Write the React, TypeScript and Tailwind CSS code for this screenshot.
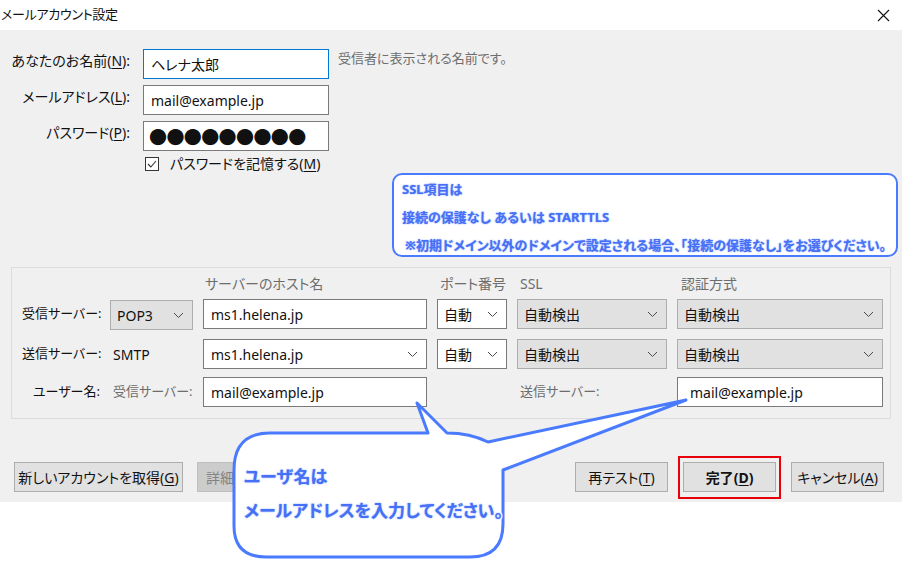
import React from "react";

const Chevron = () => (
  <svg width="11" height="7" viewBox="0 0 11 7" className="shrink-0">
    <polyline points="1,1 5.5,5.5 10,1" fill="none" stroke="#4a4a4a" strokeWidth="1" />
  </svg>
);

function TextBox({
  value,
  width,
  focused = false,
  combo = false,
}: {
  value: string;
  width: string;
  focused?: boolean;
  combo?: boolean;
}) {
  return (
    <div
      className={`flex h-[30px] items-center justify-between border bg-white pl-[7px] pr-[8px] text-[14px] text-[#111] ${width} ${
        focused ? "border-[#0078d7]" : "border-[#7a7a7a]"
      }`}
    >
      <span>{value}</span>
      {combo && <Chevron />}
    </div>
  );
}

function Select({ value, gray = true }: { value: string; gray?: boolean }) {
  return (
    <div
      className={`flex h-[30px] w-full items-center justify-between border pl-[6px] pr-[8px] text-[14px] text-[#111] ${
        gray ? "border-[#adadad] bg-[#e1e1e1]" : "border-[#7a7a7a] bg-white"
      }`}
    >
      <span>{value}</span>
      <Chevron />
    </div>
  );
}

function Button({
  children,
  width,
  bold = false,
}: {
  children: React.ReactNode;
  width: string;
  bold?: boolean;
}) {
  return (
    <div
      className={`flex h-[30px] items-center justify-center border border-[#adadad] bg-[#e1e1e1] text-[14px] text-[#111] ${width} ${
        bold ? "font-bold" : ""
      }`}
    >
      {children}
    </div>
  );
}

const Key = ({ k }: { k: string }) => (
  <>
    (<span className="underline underline-offset-2">{k}</span>)
  </>
);

const noteText =
  "font-bold text-[#4670f5] [-webkit-text-stroke:3px_#ffffff] [paint-order:stroke_fill] [text-shadow:0_0_1.5px_#6b8cff]";

const cols = "grid grid-cols-[78px_83px_224px_70px_150px_206px] gap-x-[10px]";

export default function App() {
  return (
    <div className="relative h-[583px] w-[902px] overflow-hidden whitespace-nowrap bg-white font-['Noto_Sans','Noto_Sans_CJK_JP',sans-serif] text-[#111] [font-feature-settings:'palt']">
      {/* title bar */}
      <div className="flex h-[30px] items-center justify-between">
        <span className="pl-px text-[13px] tracking-[-0.3px]">メールアカウント設定</span>
        <svg width="13" height="13" viewBox="0 0 13 13" className="mr-[12px]">
          <path d="M1 1 L12 12 M12 1 L1 12" stroke="#111" strokeWidth="1.1" />
        </svg>
      </div>

      {/* dialog body */}
      <div className="flex h-[472px] flex-col bg-[#f0f0f0] pt-[19px]">
        <div className="flex flex-col gap-[6px]">
          <div className="flex items-start">
            <span className="w-[130px] text-right text-[14px] leading-[24px]">
              あなたのお名前<Key k="N" />:
            </span>
            <div className="ml-[13px]">
              <TextBox value="ヘレナ太郎" width="w-[186px]" focused />
            </div>
            <span className="ml-[9px] text-[13px] leading-[18px] text-[#6d6d6d]">
              受信者に表示される名前です。
            </span>
          </div>
          <div className="flex items-start">
            <span className="w-[130px] text-right text-[14px] leading-[24px]">
              メールアドレス<Key k="L" />:
            </span>
            <div className="ml-[13px]">
              <TextBox value="mail@example.jp" width="w-[186px]" />
            </div>
          </div>
          <div className="flex items-start">
            <span className="w-[130px] text-right text-[14px] leading-[24px]">
              パスワード<Key k="P" />:
            </span>
            <div className="ml-[13px] flex h-[30px] w-[186px] items-center border border-[#7a7a7a] bg-white pl-[5px] font-['Noto_Sans_CJK_JP',sans-serif] text-[18px] leading-none tracking-[-0.6px]">
              ●●●●●●●●●
            </div>
          </div>
        </div>

        <div className="ml-[145px] mt-[5px] flex items-center">
          <div className="flex h-[14px] w-[14px] items-center justify-center border border-[#333] bg-white">
            <svg width="10" height="8" viewBox="0 0 10 8">
              <polyline points="1,4 3.8,7 9,1" fill="none" stroke="#333" strokeWidth="1.1" />
            </svg>
          </div>
          <span className="ml-[11px] text-[14px] leading-[16px]">
            パスワードを記憶する<Key k="M" />
          </span>
        </div>

        {/* server group */}
        <div className="ml-[11px] mt-[95px] w-[880px] border border-[#dcdcdc] pb-[11px] pl-[10px] pt-[8px]">
          <div className={`${cols} text-[14px] leading-[16px] text-[#6d6d6d]`}>
            <span />
            <span />
            <span className="pl-[2px]">サーバーのホスト名</span>
            <span className="pl-[3px]">ポート番号</span>
            <span className="pl-[3px]">SSL</span>
            <span className="pl-[4px]">認証方式</span>
          </div>

          <div className={`${cols} mt-[6px] items-center text-[14px]`}>
            <span className="text-right text-[13px]">受信サーバー:</span>
            <div className="pt-[2px]">
              <Select value="POP3" />
            </div>
            <TextBox value="ms1.helena.jp" width="w-full" />
            <Select value="自動" gray={false} />
            <Select value="自動検出" />
            <Select value="自動検出" />
          </div>

          <div className={`${cols} mt-[9px] items-center text-[14px]`}>
            <span className="text-right text-[13px]">送信サーバー:</span>
            <span className="pl-[3px]">SMTP</span>
            <TextBox value="ms1.helena.jp" width="w-full" combo />
            <Select value="自動" gray={false} />
            <Select value="自動検出" />
            <Select value="自動検出" />
          </div>

          <div className={`${cols} mt-[8px] items-center text-[14px]`}>
            <span className="text-right text-[13px]">ユーザー名:</span>
            <span className="pl-[3px] text-[13px] text-[#6d6d6d]">受信サーバー:</span>
            <TextBox value="mail@example.jp" width="w-full" />
            <span />
            <span className="pl-[3px] text-[13px] text-[#6d6d6d]">送信サーバー:</span>
            <div className="[&>div]:pl-[12px]">
              <TextBox value="mail@example.jp" width="w-full" />
            </div>
          </div>
        </div>

        {/* buttons */}
        <div className="mt-[43px] flex pl-[14px] pr-[18px]">
          <Button width="w-[169px]">
            新しいアカウントを取得<Key k="G" />
          </Button>
          <div className="ml-[14px] flex h-[30px] w-[110px] items-center border border-[#bfbfbf] bg-[#cccccc] pl-[8px] text-[14px] text-[#838383]">
            詳細
          </div>
          <div className="ml-auto flex gap-[15px]">
            <Button width="w-[93px]">
              再テスト<Key k="T" />
            </Button>
            <div className="relative">
              <Button width="w-[93px]" bold>
                完了<Key k="D" />
              </Button>
              <div className="absolute -left-[5px] -right-[5px] -top-[6px] -bottom-[7px] border-2 border-[#e8000b]" />
            </div>
            <Button width="w-[93px]">
              キャンセル<Key k="A" />
            </Button>
          </div>
        </div>
      </div>

      {/* SSL note */}
      <div className="absolute left-[392px] top-[173px] h-[84px] w-[506px] rounded-[10px] border-2 border-[#4a7bff] bg-white pl-[8px] text-[13px] leading-[28px]">
        <div className={noteText}>SSL項目は</div>
        <div className={noteText}>接続の保護なし あるいは STARTTLS</div>
        <div className={`${noteText} pl-[3px]`}>
          ※初期ドメイン以外のドメインで設定される場合、「接続の保護なし」をお選びください。
        </div>
      </div>

      {/* user name balloon */}
      <svg
        className="pointer-events-none absolute left-0 top-0"
        width="902"
        height="583"
        viewBox="0 0 902 583"
      >
        <path
          d="M 270 433 L 428 433 L 417 403 L 447 433 Q 470 433 488 442 L 686 400 L 503 470 L 503 524 Q 503 557 470 557 L 266 557 Q 234 557 234 526 L 234 470 Q 234 433 270 433 Z"
          fill="#ffffff"
          stroke="#4a7bff"
          strokeWidth="3"
          strokeLinejoin="round"
        />
      </svg>
      <div className="absolute left-[244px] top-[460px] text-[17px] leading-[34px]">
        <div className={noteText}>ユーザ名は</div>
        <div className={noteText}>メールアドレスを入力してください。</div>
      </div>
    </div>
  );
}
